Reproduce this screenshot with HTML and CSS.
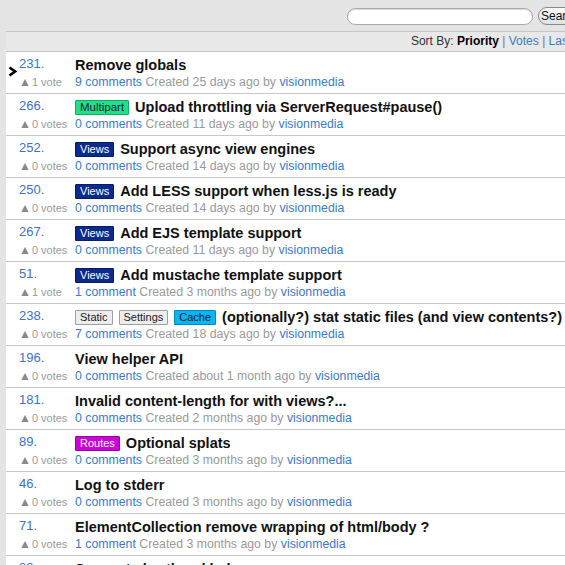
FILE: index.html
```html
<!DOCTYPE html>
<html>
<head>
<meta charset="utf-8">
<link rel="stylesheet" href="styles.css">
</head>
<body>
<div class="page">
  <div class="topbar">
    <form class="search">
      <input class="search-input" type="text">
      <button class="search-btn" type="button">Search</button>
    </form>
  </div>
  <div class="panel">
    <div class="sortbar">Sort By: <b>Priority</b> <span class="sep">|</span> <a>Votes</a> <span class="sep">|</span> <a>Last Updated</a></div>
    <ul class="list">
      <li class="row current">
        <svg class="cursor" width="9" height="11" viewBox="0 0 9 11"><polyline points="1.5,1.5 7,5.5 1.5,9.5" fill="none" stroke="#000" stroke-width="2.6" stroke-linejoin="miter"/></svg>
        <span class="num">231.</span>
        <span class="title">Remove globals</span>
        <span class="votes"><span class="tri">▲</span>1 vote</span>
        <span class="meta"><a>9 comments</a> Created 25 days ago by <a>visionmedia</a></span>
      </li>
      <li class="row">
        <span class="num">266.</span>
        <span class="title"><span class="label l-multipart">Multipart</span>Upload throttling via ServerRequest#pause()</span>
        <span class="votes"><span class="tri">▲</span>0 votes</span>
        <span class="meta"><a>0 comments</a> Created 11 days ago by <a>visionmedia</a></span>
      </li>
      <li class="row">
        <span class="num">252.</span>
        <span class="title"><span class="label l-views">Views</span>Support async view engines</span>
        <span class="votes"><span class="tri">▲</span>0 votes</span>
        <span class="meta"><a>0 comments</a> Created 14 days ago by <a>visionmedia</a></span>
      </li>
      <li class="row">
        <span class="num">250.</span>
        <span class="title"><span class="label l-views">Views</span>Add LESS support when less.js is ready</span>
        <span class="votes"><span class="tri">▲</span>0 votes</span>
        <span class="meta"><a>0 comments</a> Created 14 days ago by <a>visionmedia</a></span>
      </li>
      <li class="row">
        <span class="num">267.</span>
        <span class="title"><span class="label l-views">Views</span>Add EJS template support</span>
        <span class="votes"><span class="tri">▲</span>0 votes</span>
        <span class="meta"><a>0 comments</a> Created 11 days ago by <a>visionmedia</a></span>
      </li>
      <li class="row">
        <span class="num">51.</span>
        <span class="title"><span class="label l-views">Views</span>Add mustache template support</span>
        <span class="votes"><span class="tri">▲</span>1 vote</span>
        <span class="meta"><a>1 comment</a> Created 3 months ago by <a>visionmedia</a></span>
      </li>
      <li class="row">
        <span class="num">238.</span>
        <span class="title"><span class="label l-plain">Static</span><span class="label l-plain">Settings</span><span class="label l-cache">Cache</span>(optionally?) stat static files (and view contents?)</span>
        <span class="votes"><span class="tri">▲</span>0 votes</span>
        <span class="meta"><a>7 comments</a> Created 18 days ago by <a>visionmedia</a></span>
      </li>
      <li class="row">
        <span class="num">196.</span>
        <span class="title">View helper API</span>
        <span class="votes"><span class="tri">▲</span>0 votes</span>
        <span class="meta"><a>0 comments</a> Created about 1 month ago by <a>visionmedia</a></span>
      </li>
      <li class="row">
        <span class="num">181.</span>
        <span class="title">Invalid content-length for with views?...</span>
        <span class="votes"><span class="tri">▲</span>0 votes</span>
        <span class="meta"><a>0 comments</a> Created 2 months ago by <a>visionmedia</a></span>
      </li>
      <li class="row">
        <span class="num">89.</span>
        <span class="title"><span class="label l-routes">Routes</span>Optional splats</span>
        <span class="votes"><span class="tri">▲</span>0 votes</span>
        <span class="meta"><a>0 comments</a> Created 3 months ago by <a>visionmedia</a></span>
      </li>
      <li class="row">
        <span class="num">46.</span>
        <span class="title">Log to stderr</span>
        <span class="votes"><span class="tri">▲</span>0 votes</span>
        <span class="meta"><a>0 comments</a> Created 3 months ago by <a>visionmedia</a></span>
      </li>
      <li class="row">
        <span class="num">71.</span>
        <span class="title">ElementCollection remove wrapping of html/body ?</span>
        <span class="votes"><span class="tri">▲</span>0 votes</span>
        <span class="meta"><a>1 comment</a> Created 3 months ago by <a>visionmedia</a></span>
      </li>
      <li class="row">
        <span class="num">88.</span>
        <span class="title">Support shorthand helpers</span>
        <span class="votes"><span class="tri">▲</span>0 votes</span>
        <span class="meta"><a>0 comments</a> Created 3 months ago by <a>visionmedia</a></span>
      </li>
    </ul>
  </div>
</div>
</body>
</html>
```

FILE: styles.css
```css
html, body {
  margin: 0;
  padding: 0;
  overflow: hidden;
  background: #e4e4e4;
}
body {
  font-family: "Liberation Sans", Arial, Helvetica, sans-serif;
  color: #111;
}
.page {
  width: 630px;
}
.topbar {
  height: 31px;
  display: flex;
  justify-content: flex-end;
  align-items: center;
  padding-right: 37px;
}
.search {
  display: flex;
  align-items: center;
  gap: 5px;
  margin: 0;
  padding-top: 1px;
}
.search-input {
  width: 186px;
  height: 17px;
  box-sizing: border-box;
  border: 1px solid #a8a8a8;
  border-radius: 9px;
  background: #fff;
  box-shadow: inset 0 1px 1px rgba(0,0,0,0.15);
  padding: 0 8px;
  margin: 0;
}
.search-btn {
  width: 55px;
  height: 18px;
  box-sizing: border-box;
  border: 1px solid #888;
  border-radius: 9px;
  background: linear-gradient(#fdfdfd, #e0e0e0);
  font-family: "Liberation Sans", Arial, sans-serif;
  font-size: 12px;
  color: #111;
  padding: 0 0 0 2px;
  text-align: left;
  margin: 0;
}
.panel {
  margin-left: 6px;
  border-top: 1px solid #c6c6c6;
  background: #fff;
}
.sortbar {
  height: 19px;
  line-height: 19px;
  background: #e8e8e8;
  border-bottom: 1px solid #c8c8c8;
  text-align: right;
  padding-right: 10px;
  font-size: 12px;
  color: #333;
}
.sortbar b {
  color: #000;
}
.sortbar a {
  color: #3d79c9;
}
.sortbar .sep {
  color: #777;
}
.list {
  list-style: none;
  margin: 0;
  padding: 0;
}
.row {
  position: relative;
  height: 42px;
  box-sizing: border-box;
  padding: 4px 0 0 13px;
  border-bottom: 1px solid #c8c8c8;
  display: grid;
  grid-template-columns: 56px 1fr;
  grid-template-rows: 18px 17px;
  align-items: center;
}
.cursor {
  position: absolute;
  left: 2px;
  top: 14px;
}
.num {
  font-size: 13px;
  color: #3d72c4;
  align-self: start;
  line-height: 15px;
}
.title {
  font-size: 14.5px;
  font-weight: bold;
  color: #111;
  white-space: nowrap;
  display: flex;
  align-items: center;
  gap: 6px;
  line-height: 18px;
}
.label {
  display: inline-block;
  font-size: 11.5px;
  font-weight: normal;
  line-height: 13px;
  padding: 0 4px;
  border: 1px solid;
  border-radius: 1px;
}
.l-multipart {
  background: #20e08c;
  border-color: #15a868;
  color: #102030;
}
.l-views {
  background: #0c2a8c;
  border-color: #081c66;
  color: #fff;
  font-size: 11px;
}
.l-plain {
  background: #ededed;
  border-color: #a0a0a0;
  color: #222;
  font-size: 11px;
}
.l-cache {
  background: #04b6f2;
  border-color: #0288c0;
  color: #0a1a2a;
  font-size: 11px;
}
.l-routes {
  background: #cc00d8;
  border-color: #9800a4;
  color: #fff;
  font-size: 11px;
}
.votes {
  font-size: 11px;
  color: #9a9a9a;
  white-space: nowrap;
  line-height: 17px;
}
.tri {
  color: #888;
  font-size: 12px;
  margin-right: 1px;
}
.meta {
  font-size: 12.3px;
  color: #9a9a9a;
  white-space: nowrap;
  line-height: 17px;
}
.meta a {
  color: #3d79c9;
}
```
